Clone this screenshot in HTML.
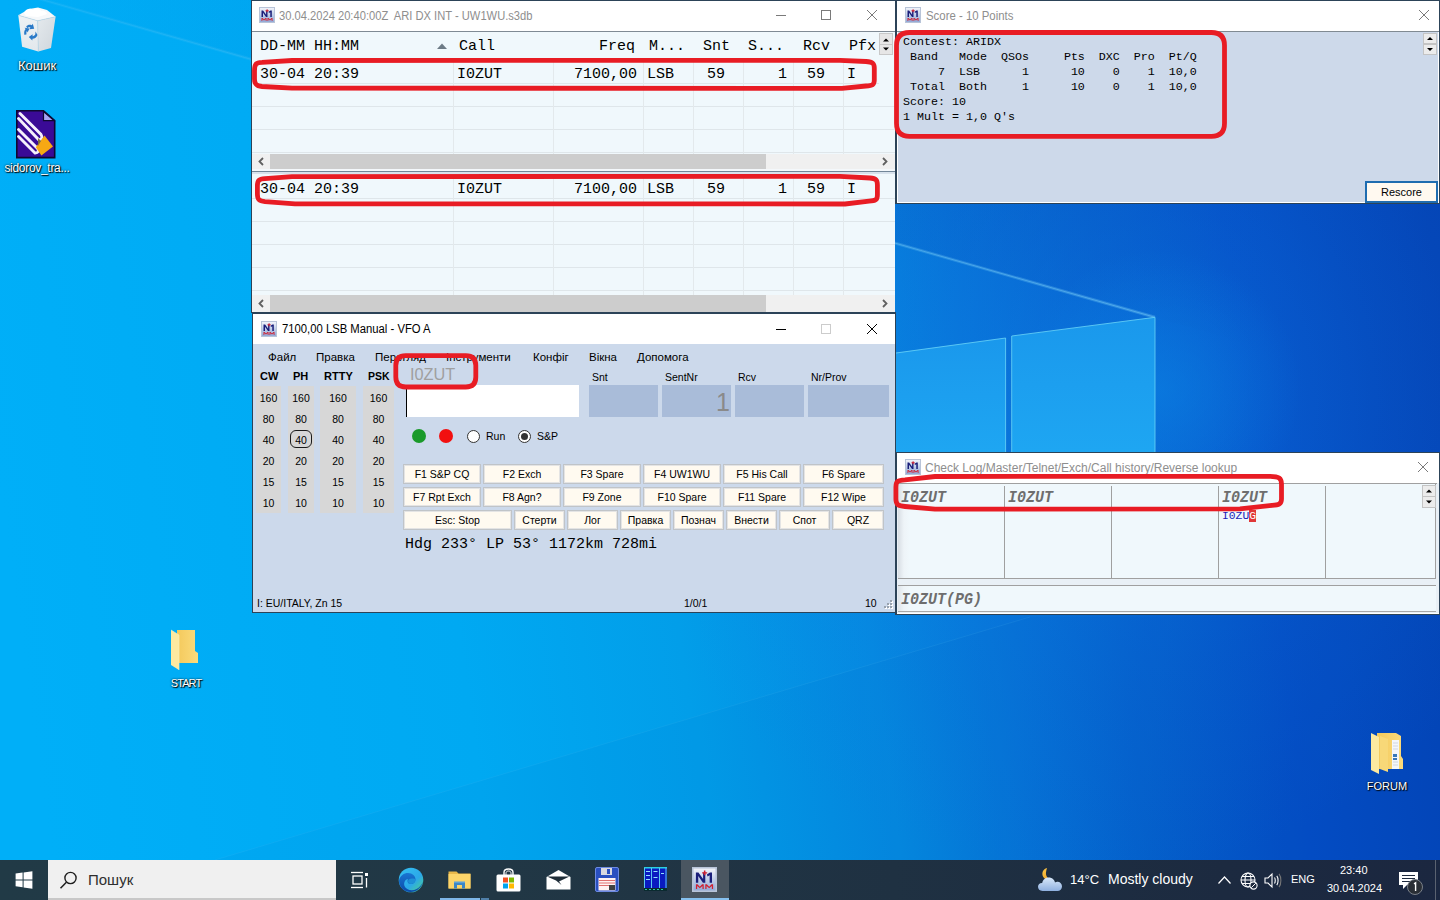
<!DOCTYPE html>
<html><head><meta charset="utf-8">
<style>
*{margin:0;padding:0;box-sizing:border-box}
html,body{width:1440px;height:900px;overflow:hidden}
body{position:relative;font-family:"Liberation Sans",sans-serif;background:#00aef5}
.a{position:absolute}
.mono{font-family:"Liberation Mono",monospace}
.pre{white-space:pre}
#wall{position:absolute;left:0;top:0;width:1440px;height:860px;
 background:linear-gradient(96deg,#00b0f8 0%,#00adf4 50%,#038ce4 64%,#055fcf 76%,#0546b8 90%,#0a3ca8 100%)}
.win{position:absolute;overflow:hidden}
.tb{position:absolute;left:0;top:0;right:0;background:#fff}
.ttl{position:absolute;font-size:12px;color:#8c8c8c;white-space:pre}
.ico{position:absolute;width:16px;height:16px}
#taskbar{position:absolute;left:0;top:860px;width:1440px;height:40px;background:linear-gradient(90deg,#213a46 0%,#213745 35%,#1f3142 62%,#1c2a40 85%,#1b2740 100%)}
.dlbl{position:absolute;color:#fff;font-size:12px;text-align:center;text-shadow:0 0 2px #000,1px 1px 1px #000}
.band{top:386px;height:127px;background:#d7d7d7}
.bnum{top:387.5px;font-size:10.5px;line-height:21px;text-align:center;color:#000}
.fbox{top:385px;height:32px;background:#a9bcd9}
.fk{height:20px;background:#fffaf0;border:1px solid #c0c4c8;box-shadow:inset 0 0 0 1px #e4e4e4;font-size:10.5px;line-height:18px;text-align:center;color:#000;white-space:pre}
.chk{font-size:15px;line-height:18px;font-weight:bold;font-style:italic;color:#6e6e6e}
</style></head>
<body>
<svg id="wall" class="a" style="left:0;top:0" width="1440" height="860" viewBox="0 0 1440 860">
<defs>
 <linearGradient id="wbase" x1="0" y1="500" x2="1440" y2="300" gradientUnits="userSpaceOnUse">
  <stop offset="0" stop-color="#00aff8"/>
  <stop offset=".30" stop-color="#00a9f2"/>
  <stop offset=".45" stop-color="#029ee9"/>
  <stop offset=".58" stop-color="#0589e0"/>
  <stop offset=".67" stop-color="#0672d6"/>
  <stop offset=".75" stop-color="#0560cc"/>
  <stop offset=".86" stop-color="#044cc4"/>
  <stop offset="1" stop-color="#0442b4"/>
 </linearGradient>
 <linearGradient id="wpane" x1="0" y1="0" x2="0" y2="1">
  <stop offset="0" stop-color="#1a98ec"/>
  <stop offset="1" stop-color="#1ea6f2"/>
 </linearGradient>
 <linearGradient id="wshad" x1="0" y1="0" x2="1440" y2="0" gradientUnits="userSpaceOnUse">
  <stop offset="0" stop-color="#0446b4" stop-opacity="0"/>
  <stop offset=".25" stop-color="#0446b4" stop-opacity=".06"/>
  <stop offset=".62" stop-color="#0446b4" stop-opacity=".2"/>
  <stop offset=".76" stop-color="#0446b4" stop-opacity=".22"/>
  <stop offset=".88" stop-color="#0446b4" stop-opacity="0"/>
 </linearGradient>
 <linearGradient id="wbeam" x1="0" y1="0" x2="1155" y2="0" gradientUnits="userSpaceOnUse">
  <stop offset="0" stop-color="#7ad0f8" stop-opacity=".15"/>
  <stop offset=".6" stop-color="#7ad0f8" stop-opacity=".4"/>
  <stop offset="1" stop-color="#7ad0f8" stop-opacity=".6"/>
 </linearGradient>
 <radialGradient id="wglow2" cx="1090" cy="400" r="480" gradientUnits="userSpaceOnUse">
  <stop offset="0" stop-color="#1080e8" stop-opacity=".45"/>
  <stop offset=".6" stop-color="#1080e8" stop-opacity=".15"/>
  <stop offset="1" stop-color="#1080e8" stop-opacity="0"/>
 </radialGradient>
 <radialGradient id="wglow" cx="1160" cy="390" r="140" gradientUnits="userSpaceOnUse">
  <stop offset="0" stop-color="#0a84e4" stop-opacity=".55"/>
  <stop offset="1" stop-color="#0a84e4" stop-opacity="0"/>
 </radialGradient>
</defs>
<rect width="1440" height="860" fill="url(#wbase)"/>
<polygon points="0,-12.4 1155,317.3 1440,399 1440,0 0,0" fill="url(#wshad)"/>
<rect x="700" y="0" width="740" height="860" fill="url(#wglow2)"/>
<rect x="1000" y="250" width="320" height="280" fill="url(#wglow)"/>
<polygon points="1030,617 215,860 1440,860 1440,617" fill="#0446b4" opacity=".05"/>
<path d="M0 -12.4L1155 317.3" stroke="url(#wbeam)" stroke-width="3" opacity=".5"/><path d="M0 -12.4L1155 317.3" stroke="url(#wbeam)" stroke-width="1" opacity=".8"/>
<line x1="1030" y1="617" x2="215" y2="860" stroke="#5cc4f4" stroke-width="1" opacity=".12"/>
<polygon points="880,355 1005.6,338 1005.6,452 880,452" fill="url(#wpane)"/>
<polygon points="1011.7,336 1155,317.3 1155,452 1011.7,452" fill="url(#wpane)"/>
<path d="M896 353L1005.6 338V452M1011.7 452V336L1155 317.3V452" fill="none" stroke="#6ad4f8" stroke-width="1" opacity=".8"/>
</svg>
<svg width="0" height="0" style="position:absolute"><defs><linearGradient id="nmg" x1="0" y1="0" x2="0" y2="1"><stop offset="0" stop-color="#f4f6fb"/><stop offset="1" stop-color="#8ea6d6"/></linearGradient><symbol id="nmico" viewBox="0 0 16 16"><rect x="0" y="0" width="16" height="16" fill="#8aa0c8"/><rect x="0.5" y="0.5" width="15" height="15" fill="url(#nmg)" stroke="#b8c4d8"/><path d="M2.5 10V3.5h1.6l3 4.2V3.5h1.4V10H7L4 5.8V10z" fill="#1a1e7a"/><path d="M9.5 4.8l2-1.3h1.3V10h-1.5V5.2l-1.3.8z" fill="#1a1e7a"/><path d="M7.6 2.2h1v1.1h1.1v.9H8.6v1.1h-1V4.2H6.5v-.9h1.1z" fill="#d02030"/><path d="M2.5 14v-3h1l1.5 1.6L6.5 11h1v3h-.8v-1.8L5 13.6 3.3 12.2V14zM8.5 14v-3h1l1.5 1.6 1.5-1.6h1v3h-.8v-1.8L11 13.6 9.3 12.2V14z" fill="#d02030"/></symbol></defs></svg>

<!-- DESKTOP ICONS -->
<svg class="a" style="left:14px;top:4px" width="48" height="52" viewBox="0 0 48 52">
 <defs><linearGradient id="rbl" x1="0" y1="0" x2="0" y2="1"><stop offset="0" stop-color="#eef2f5"/><stop offset="1" stop-color="#e2e8ec"/></linearGradient>
 <linearGradient id="rbr" x1="0" y1="0" x2="1" y2="1"><stop offset="0" stop-color="#e4e9ed"/><stop offset="1" stop-color="#cfd6dc"/></linearGradient></defs>
 <path d="M4.3 11.3L15 5L24 3.5L33 6L41.6 12.7L23.7 16.8z" fill="#f6f8fa"/>
 <path d="M10 9C12 4 17 4 19 6C21 3 26 4 27 7C30 6 33 8 33 10L24 13L12 12z" fill="#ffffff"/>
 <path d="M4.3 11.3L23.7 16.8L24.3 47.4L8.1 42.8z" fill="url(#rbl)"/>
 <path d="M23.7 16.8L41.6 12.7L37 43.9L24.3 47.4z" fill="url(#rbr)"/>
 <path d="M4.3 11.3L23.7 16.8L41.6 12.7M23.7 16.8L24.3 47.4" fill="none" stroke="#c4d4e0" stroke-width=".7"/>
 <g fill="#2a7ac8">
  <path d="M12.2 22.5C13.5 20.8 15.8 20.2 17.8 21.2L18.8 19.8L20.2 24.8L15.4 25.2L16.4 23.6C15.2 23 14 23.3 13.3 24.2z"/>
  <path d="M21.5 27.5L23.5 31C22.8 33.3 20.8 34.8 18.5 34.8L18.3 36.6L14.8 33L18.6 30.3L18.6 32.2C19.8 32.2 20.9 31.4 21.3 30.3z"/>
  <path d="M10.5 31C9.8 28.8 10.2 26.6 11.6 25L10.6 23.8L15.5 24.6L13.6 28.6L12.9 27.1C12.3 28 12.2 29.2 12.6 30.2z"/>
 </g>
</svg>
<div class="dlbl" style="left:0px;top:58px;width:74px;font-size:13px;line-height:15px">Кошик</div>
<svg class="a" style="left:16px;top:110px" width="40" height="49" viewBox="0 0 40 49">
 <path d="M0.8 0.8H27.5L38.7 10.6V47.6H0.8z" fill="#3a0a96" stroke="#0e0830" stroke-width="1.6"/>
 <path d="M27.5 1.5V10.6H38z" fill="#a8a4f4" stroke="#0e0830" stroke-width="1.2"/>
 <g fill="none" stroke="#f6f0fc" stroke-width="2.9" stroke-linecap="round"><path d="M4 3.5L25 24.5Q27.5 28.5 23 30L2.5 8.5"/><path d="M2.5 19.5L21.5 38.5Q24 42.5 19 43L2.5 26.5"/></g>
 <path d="M28.5 25.4L37 36.6L25.4 45.4L19.8 37.2z" fill="#f6a814"/>
 <path d="M22 28L25 31L22 36z" fill="#807040"/>
</svg>
<div class="dlbl" style="left:-4px;top:161px;width:82px;font-size:12px;line-height:14px;letter-spacing:-.3px">sidorov_tra...</div>
<svg class="a" style="left:170px;top:629px" width="30" height="42" viewBox="0 0 30 42">
 <defs><linearGradient id="fg1" x1="0" y1="0" x2="1" y2="0"><stop offset="0" stop-color="#f4c95c"/><stop offset="1" stop-color="#fbdb7c"/></linearGradient></defs>
 <path d="M7 1H25V22L28 24V34H7z" fill="url(#fg1)"/>
 <path d="M1 1L9 6V41L1 36z" fill="#fde9a0"/>
 <path d="M1 1L9 6V41" fill="none" stroke="#f8f0c0" stroke-width=".6"/>
</svg>
<div class="dlbl" style="left:146px;top:676px;width:80px;font-size:11px;line-height:14px;letter-spacing:-.9px">START</div>
<svg class="a" style="left:1370px;top:732px" width="34" height="43" viewBox="0 0 34 43">
 <defs><linearGradient id="fg2" x1="0" y1="0" x2="1" y2="0"><stop offset="0" stop-color="#f4c95c"/><stop offset="1" stop-color="#fbdb7c"/></linearGradient></defs>
 <path d="M7 1H26L31 4V24L33 27V37H7z" fill="url(#fg2)"/>
 <path d="M22 8H29V37H22z" fill="#f4f6fa"/>
 <g fill="#3a78b8"><rect x="23" y="22" width="4" height="3"/><rect x="23" y="26" width="4" height="2"/></g>
 <g stroke="#b8c4d0" stroke-width=".6"><path d="M23 11H28M23 14H28M23 17H28M23 30H28M23 33H28"/></g>
 <path d="M1 1L9 5V42L1 38z" fill="#fde9a0"/>
 <path d="M10 4L18 7V40L10 37z" fill="#f8d878"/>
</svg>
<div class="dlbl" style="left:1347px;top:779px;width:80px;font-size:11px;line-height:14px">FORUM</div>

<!-- LOG WINDOW -->
<div class="a" style="left:251px;top:0;width:644px;height:313px;background:#2c4358"></div>
<div class="a" style="left:252px;top:1px;width:643px;height:30px;background:#fff"></div>
<div class="a" style="left:252px;top:31px;width:643px;height:1px;background:#7f8a94"></div>
<div class="ico" style="left:259px;top:7px"><svg width="16" height="16" viewBox="0 0 16 16"><rect x="0" y="0" width="16" height="16" fill="#8aa0c8"/><rect x="0.5" y="0.5" width="15" height="15" fill="url(#nmg)" stroke="#b8c4d8"/><path d="M2.5 10V3.5h1.6l3 4.2V3.5h1.4V10H7L4 5.8V10z" fill="#1a1e7a"/><path d="M9.5 4.8l2-1.3h1.3V10h-1.5V5.2l-1.3.8z" fill="#1a1e7a"/><path d="M7.6 2.2h1v1.1h1.1v.9H8.6v1.1h-1V4.2H6.5v-.9h1.1z" fill="#d02030"/><path d="M2.5 14v-3h1l1.5 1.6L6.5 11h1v3h-.8v-1.8L5 13.6 3.3 12.2V14zM8.5 14v-3h1l1.5 1.6 1.5-1.6h1v3h-.8v-1.8L11 13.6 9.3 12.2V14z" fill="#d02030"/></svg></div>
<div class="ttl" style="left:279px;top:9px;font-size:12px;color:#8e8e8e;transform:scaleX(.93);transform-origin:0 0">30.04.2024 20:40:00Z  ARI DX INT - UW1WU.s3db</div>
<svg class="a" style="left:770px;top:4px" width="120" height="24">
 <line x1="6" y1="11.5" x2="16" y2="11.5" stroke="#7a7a7a" stroke-width="1"/>
 <rect x="51.5" y="6.5" width="9" height="9" fill="none" stroke="#7a7a7a" stroke-width="1"/>
 <path d="M97 6L107 16M107 6L97 16" stroke="#7a7a7a" stroke-width="1"/>
</svg>
<!-- grid pane 1 -->
<div class="a" style="left:252px;top:32px;width:643px;height:122px;background:#f0f8fc"></div>
<div class="a mono pre" style="left:260px;top:38px;font-size:15px;line-height:18px;color:#000">DD-MM HH:MM</div>
<svg class="a" style="left:436px;top:42px" width="12" height="8"><path d="M1 7L6 1.5L11 7z" fill="#6d7b86"/></svg>
<div class="a mono pre" style="left:459px;top:38px;font-size:15px;line-height:18px">Call</div>
<div class="a mono pre" style="left:599px;top:38px;font-size:15px;line-height:18px">Freq</div>
<div class="a mono pre" style="left:649px;top:38px;font-size:15px;line-height:18px">M...</div>
<div class="a mono pre" style="left:703px;top:38px;font-size:15px;line-height:18px">Snt</div>
<div class="a mono pre" style="left:748px;top:38px;font-size:15px;line-height:18px">S...</div>
<div class="a mono pre" style="left:803px;top:38px;font-size:15px;line-height:18px">Rcv</div>
<div class="a mono pre" style="left:849px;top:38px;font-size:15px;line-height:18px">Pfx</div>
<!-- spin -->
<div class="a" style="left:879px;top:33px;width:14px;height:22px;background:#e6e6e6;border:1px solid #c8c8c8"></div>
<div class="a" style="left:879px;top:44px;width:14px;height:1px;background:#c8c8c8"></div>
<svg class="a" style="left:879px;top:33px" width="14" height="22"><path d="M4 8.5L7 5.5L10 8.5z" fill="#000"/><path d="M4 14.5L7 17.5L10 14.5z" fill="#000"/></svg>
<!-- grid lines pane1 -->
<div class="a" style="left:252px;top:83px;width:627px;height:1px;background:#dfe6ea"></div>
<div class="a" style="left:252px;top:106px;width:643px;height:1px;background:#dfe6ea"></div>
<div class="a" style="left:252px;top:129px;width:643px;height:1px;background:#dfe6ea"></div>
<div class="a" style="left:252px;top:152px;width:643px;height:1px;background:#dfe6ea"></div>
<div class="a" style="left:453px;top:61px;width:1px;height:93px;background:#e3e9ec"></div>
<div class="a" style="left:553px;top:61px;width:1px;height:93px;background:#e3e9ec"></div>
<div class="a" style="left:643px;top:61px;width:1px;height:93px;background:#e3e9ec"></div>
<div class="a" style="left:693px;top:61px;width:1px;height:93px;background:#e3e9ec"></div>
<div class="a" style="left:743px;top:61px;width:1px;height:93px;background:#e3e9ec"></div>
<div class="a" style="left:793px;top:61px;width:1px;height:93px;background:#e3e9ec"></div>
<div class="a" style="left:843px;top:61px;width:1px;height:93px;background:#e3e9ec"></div>
<!-- row 1 -->
<div class="a mono pre" style="left:260px;top:66px;font-size:15px;line-height:18px">30-04 20:39</div>
<div class="a mono pre" style="left:457px;top:66px;font-size:15px;line-height:18px">I0ZUT</div>
<div class="a mono pre" style="left:574px;top:66px;font-size:15px;line-height:18px">7100,00</div>
<div class="a mono pre" style="left:647px;top:66px;font-size:15px;line-height:18px">LSB</div>
<div class="a mono pre" style="left:707px;top:66px;font-size:15px;line-height:18px">59</div>
<div class="a mono pre" style="left:778px;top:66px;font-size:15px;line-height:18px">1</div>
<div class="a mono pre" style="left:807px;top:66px;font-size:15px;line-height:18px">59</div>
<div class="a mono pre" style="left:847px;top:66px;font-size:15px;line-height:18px">I</div>
<!-- scrollbar 1 -->
<div class="a" style="left:252px;top:154px;width:643px;height:15px;background:#f0f0f0"></div>
<div class="a" style="left:270px;top:154px;width:496px;height:15px;background:#cdcdcd"></div>
<svg class="a" style="left:252px;top:154px" width="642" height="15"><path d="M11 4L7.5 7.5L11 11" fill="none" stroke="#606060" stroke-width="1.8"/><path d="M631 4L634.5 7.5L631 11" fill="none" stroke="#606060" stroke-width="1.8"/></svg>
<div class="a" style="left:252px;top:169px;width:643px;height:5px;background:#f4f8fb"></div>
<div class="a" style="left:252px;top:171px;width:643px;height:1px;background:#728698"></div>
<div class="a" style="left:252px;top:172px;width:643px;height:2px;background:#d8e2ec"></div>
<!-- pane 2 -->
<div class="a" style="left:252px;top:174px;width:643px;height:121px;background:#f0f8fc"></div>
<div class="a" style="left:252px;top:198px;width:643px;height:1px;background:#dfe6ea"></div>
<div class="a" style="left:252px;top:221px;width:643px;height:1px;background:#dfe6ea"></div>
<div class="a" style="left:252px;top:244px;width:643px;height:1px;background:#dfe6ea"></div>
<div class="a" style="left:252px;top:267px;width:643px;height:1px;background:#dfe6ea"></div>
<div class="a" style="left:252px;top:290px;width:643px;height:1px;background:#dfe6ea"></div>
<div class="a" style="left:453px;top:175px;width:1px;height:120px;background:#e3e9ec"></div>
<div class="a" style="left:553px;top:175px;width:1px;height:120px;background:#e3e9ec"></div>
<div class="a" style="left:643px;top:175px;width:1px;height:120px;background:#e3e9ec"></div>
<div class="a" style="left:693px;top:175px;width:1px;height:120px;background:#e3e9ec"></div>
<div class="a" style="left:743px;top:175px;width:1px;height:120px;background:#e3e9ec"></div>
<div class="a" style="left:793px;top:175px;width:1px;height:120px;background:#e3e9ec"></div>
<div class="a" style="left:843px;top:175px;width:1px;height:120px;background:#e3e9ec"></div>
<div class="a mono pre" style="left:260px;top:181px;font-size:15px;line-height:18px">30-04 20:39</div>
<div class="a mono pre" style="left:457px;top:181px;font-size:15px;line-height:18px">I0ZUT</div>
<div class="a mono pre" style="left:574px;top:181px;font-size:15px;line-height:18px">7100,00</div>
<div class="a mono pre" style="left:647px;top:181px;font-size:15px;line-height:18px">LSB</div>
<div class="a mono pre" style="left:707px;top:181px;font-size:15px;line-height:18px">59</div>
<div class="a mono pre" style="left:778px;top:181px;font-size:15px;line-height:18px">1</div>
<div class="a mono pre" style="left:807px;top:181px;font-size:15px;line-height:18px">59</div>
<div class="a mono pre" style="left:847px;top:181px;font-size:15px;line-height:18px">I</div>
<!-- scrollbar 2 -->
<div class="a" style="left:252px;top:295px;width:643px;height:17px;background:#f0f0f0"></div>
<div class="a" style="left:270px;top:295px;width:496px;height:17px;background:#cdcdcd"></div>
<svg class="a" style="left:252px;top:295px" width="642" height="17"><path d="M11 5L7.5 8.5L11 12" fill="none" stroke="#606060" stroke-width="1.8"/><path d="M631 5L634.5 8.5L631 12" fill="none" stroke="#606060" stroke-width="1.8"/></svg>

<!-- SCORE WINDOW -->
<div class="a" style="left:895px;top:0;width:545px;height:204px;background:#2c4358"></div>
<div class="a" style="left:897px;top:1px;width:542px;height:202px;background:#fff"></div>
<div class="a" style="left:898px;top:31px;width:540px;height:171px;background:#cdd9ea"></div>
<div class="a" style="left:897px;top:31px;width:542px;height:1px;background:#808a92"></div>
<svg class="ico" style="left:905px;top:7px" width="16" height="16" viewBox="0 0 16 16"><use href="#nmico"/></svg>
<div class="ttl" style="left:926px;top:9px;font-size:12px;color:#8e8e8e;transform:scaleX(.95);transform-origin:0 0">Score - 10 Points</div>
<svg class="a" style="left:1414px;top:5px" width="20" height="20"><path d="M5 5L15 15M15 5L5 15" stroke="#7a7a7a" stroke-width="1"/></svg>
<div class="a mono pre" style="left:903px;top:35px;font-size:11.67px;line-height:15px;color:#000">Contest: ARIDX
 Band   Mode  QSOs     Pts  DXC  Pro  Pt/Q
     7  LSB      1      10    0    1  10,0
 Total  Both     1      10    0    1  10,0
Score: 10
1 Mult = 1,0 Q's</div>
<div class="a" style="left:1423px;top:33px;width:14px;height:11px;background:#ececec;border:1px solid #c4c4c4"></div>
<div class="a" style="left:1423px;top:44px;width:14px;height:11px;background:#ececec;border:1px solid #c4c4c4"></div>
<svg class="a" style="left:1423px;top:33px" width="14" height="22"><path d="M4 7L7 4L10 7z" fill="#000"/><path d="M4 15L7 18L10 15z" fill="#000"/></svg>
<div class="a" style="left:1365px;top:181px;width:73px;height:22px;border:2px solid #1e6cb0;background:#fff9f0;font-size:11px;line-height:18px;text-align:center;color:#000">Rescore</div>

<!-- ENTRY WINDOW -->
<div class="a" style="left:252px;top:312px;width:644px;height:301px;background:#2c4358"></div>
<div class="a" style="left:253px;top:314px;width:642px;height:30px;background:#fff"></div>
<div class="a" style="left:253px;top:344px;width:642px;height:268px;background:#ccd9eb"></div>
<svg class="ico" style="left:261px;top:321px" width="16" height="16" viewBox="0 0 16 16"><use href="#nmico"/></svg>
<div class="ttl" style="left:282px;top:322px;font-size:12px;color:#000;transform:scaleX(.94);transform-origin:0 0">7100,00 LSB Manual - VFO A</div>
<svg class="a" style="left:770px;top:318px" width="120" height="24">
 <line x1="6" y1="11.5" x2="16" y2="11.5" stroke="#000" stroke-width="1"/>
 <rect x="51.5" y="6.5" width="9" height="9" fill="none" stroke="#cccccc" stroke-width="1"/>
 <path d="M97 6L107 16M107 6L97 16" stroke="#000" stroke-width="1"/>
</svg>
<!-- menu -->
<div class="a pre" style="left:268px;top:350px;font-size:11.5px;line-height:14px;color:#000">Файл</div>
<div class="a pre" style="left:316px;top:350px;font-size:11.5px;line-height:14px">Правка</div>
<div class="a pre" style="left:375px;top:350px;font-size:11.5px;line-height:14px">Перегляд</div>
<div class="a pre" style="left:446px;top:350px;font-size:11.5px;line-height:14px">Інструменти</div>
<div class="a pre" style="left:533px;top:350px;font-size:11.5px;line-height:14px">Конфіг</div>
<div class="a pre" style="left:589px;top:350px;font-size:11.5px;line-height:14px">Вікна</div>
<div class="a pre" style="left:637px;top:350px;font-size:11.5px;line-height:14px">Допомога</div>
<!-- band headers -->
<div class="a pre" style="left:260px;top:370px;font-size:11px;font-weight:bold;line-height:13px">CW</div>
<div class="a pre" style="left:293px;top:370px;font-size:11px;font-weight:bold;line-height:13px">PH</div>
<div class="a pre" style="left:324px;top:370px;font-size:11px;font-weight:bold;line-height:13px">RTTY</div>
<div class="a pre" style="left:368px;top:370px;font-size:10.5px;font-weight:bold;line-height:13px">PSK</div>
<!-- band columns -->
<div class="a band" style="left:256px;width:25px"></div>
<div class="a band" style="left:288px;width:26px"></div>
<div class="a band" style="left:320px;width:36px"></div>
<div class="a band" style="left:363px;width:31px"></div>
<div class="a bnum" style="left:256px;width:25px">160<br>80<br>40<br>20<br>15<br>10</div>
<div class="a bnum" style="left:288px;width:26px">160<br>80<br>40<br>20<br>15<br>10</div>
<div class="a bnum" style="left:320px;width:36px">160<br>80<br>40<br>20<br>15<br>10</div>
<div class="a bnum" style="left:363px;width:31px">160<br>80<br>40<br>20<br>15<br>10</div>
<div class="a" style="left:290px;top:430px;width:22px;height:18px;border:1.3px solid #1a1a1a;border-radius:6px"></div>
<!-- call -->
<div class="a pre" style="left:410px;top:365px;font-size:17px;line-height:20px;color:#a0a0a0;transform:scaleX(.96);transform-origin:0 0">I0ZUT</div>
<div class="a" style="left:406px;top:385px;width:173px;height:32px;background:#fff"></div>
<div class="a" style="left:406px;top:386px;width:1px;height:31px;background:#000"></div>
<!-- labels -->
<div class="a pre" style="left:592px;top:371px;font-size:10.5px;line-height:13px">Snt</div>
<div class="a pre" style="left:665px;top:371px;font-size:10.5px;line-height:13px">SentNr</div>
<div class="a pre" style="left:738px;top:371px;font-size:10.5px;line-height:13px">Rcv</div>
<div class="a pre" style="left:811px;top:371px;font-size:10.5px;line-height:13px">Nr/Prov</div>
<div class="a fbox" style="left:589px;width:69px"></div>
<div class="a fbox" style="left:662px;width:69px"></div>
<div class="a fbox" style="left:735px;width:69px"></div>
<div class="a fbox" style="left:808px;width:81px"></div>
<div class="a pre" style="left:716px;top:388px;font-size:25px;line-height:28px;color:#8a8a8a">1</div>
<!-- leds & radios -->
<div class="a" style="left:412px;top:429px;width:14px;height:14px;border-radius:50%;background:#1a9a2a"></div>
<div class="a" style="left:439px;top:429px;width:14px;height:14px;border-radius:50%;background:#f21010"></div>
<div class="a" style="left:467px;top:430px;width:13px;height:13px;border-radius:50%;background:#fff;border:1px solid #333"></div>
<div class="a pre" style="left:486px;top:430px;font-size:10.5px;line-height:13px">Run</div>
<div class="a" style="left:518px;top:430px;width:13px;height:13px;border-radius:50%;background:#fff;border:1px solid #333"></div>
<div class="a" style="left:521px;top:433px;width:7px;height:7px;border-radius:50%;background:#333"></div>
<div class="a pre" style="left:537px;top:430px;font-size:10.5px;line-height:13px">S&amp;P</div>
<!-- function keys -->
<div class="a fk" style="left:403px;top:464px;width:78px">F1 S&amp;P CQ</div>
<div class="a fk" style="left:483px;top:464px;width:78px">F2 Exch</div>
<div class="a fk" style="left:563px;top:464px;width:78px">F3 Spare</div>
<div class="a fk" style="left:643px;top:464px;width:78px">F4 UW1WU</div>
<div class="a fk" style="left:723px;top:464px;width:78px">F5 His Call</div>
<div class="a fk" style="left:803px;top:464px;width:81px">F6 Spare</div>
<div class="a fk" style="left:403px;top:487px;width:78px">F7 Rpt Exch</div>
<div class="a fk" style="left:483px;top:487px;width:78px">F8 Agn?</div>
<div class="a fk" style="left:563px;top:487px;width:78px">F9 Zone</div>
<div class="a fk" style="left:643px;top:487px;width:78px">F10 Spare</div>
<div class="a fk" style="left:723px;top:487px;width:78px">F11 Spare</div>
<div class="a fk" style="left:803px;top:487px;width:81px">F12 Wipe</div>
<div class="a fk" style="left:403px;top:510px;width:109px">Esc: Stop</div>
<div class="a fk" style="left:514px;top:510px;width:51px">Стерти</div>
<div class="a fk" style="left:567px;top:510px;width:51px">Лог</div>
<div class="a fk" style="left:620px;top:510px;width:51px">Правка</div>
<div class="a fk" style="left:673px;top:510px;width:51px">Познач</div>
<div class="a fk" style="left:726px;top:510px;width:51px">Внести</div>
<div class="a fk" style="left:779px;top:510px;width:51px">Спот</div>
<div class="a fk" style="left:832px;top:510px;width:52px">QRZ</div>
<div class="a mono pre" style="left:405px;top:536px;font-size:15px;line-height:18px">Hdg 233° LP 53° 1172km 728mi</div>
<!-- status -->
<div class="a pre" style="left:257px;top:597px;font-size:10.5px;line-height:12px">I: EU/ITALY, Zn 15</div>
<div class="a pre" style="left:684px;top:597px;font-size:10.5px;line-height:12px">1/0/1</div>
<div class="a pre" style="left:865px;top:597px;font-size:10.5px;line-height:12px">10</div>
<svg class="a" style="left:882px;top:599px" width="12" height="12"><g fill="#fff"><rect x="9" y="2" width="2" height="2"/><rect x="6" y="5" width="2" height="2"/><rect x="9" y="5" width="2" height="2"/><rect x="3" y="8" width="2" height="2"/><rect x="6" y="8" width="2" height="2"/><rect x="9" y="8" width="2" height="2"/></g><g fill="#98a2ae"><rect x="8" y="1" width="2" height="2"/><rect x="5" y="4" width="2" height="2"/><rect x="8" y="4" width="2" height="2"/><rect x="2" y="7" width="2" height="2"/><rect x="5" y="7" width="2" height="2"/><rect x="8" y="7" width="2" height="2"/></g></svg>

<!-- CHECK WINDOW -->
<div class="a" style="left:895px;top:452px;width:545px;height:163px;background:#2c4358"></div>
<div class="a" style="left:897px;top:453px;width:542px;height:161px;background:#fff"></div>
<svg class="ico" style="left:905px;top:459px" width="16" height="16" viewBox="0 0 16 16"><use href="#nmico"/></svg>
<div class="ttl" style="left:925px;top:461px;font-size:12px;color:#8e8e8e">Check Log/Master/Telnet/Exch/Call history/Reverse lookup</div>
<svg class="a" style="left:1413px;top:457px" width="20" height="20"><path d="M5 5L15 15M15 5L5 15" stroke="#7a7a7a" stroke-width="1"/></svg>
<div class="a" style="left:897px;top:483px;width:542px;height:130px;background:#e9f0f6"></div>
<div class="a" style="left:897px;top:483px;width:540px;height:1px;background:#a0a0a0"></div>
<div class="a" style="left:898px;top:484px;width:538px;height:94px;background:linear-gradient(90deg,#d8dee4 0px,#eef4f8 6px,#f0f8fc 12px)"></div>
<div class="a" style="left:898px;top:578px;width:538px;height:1px;background:#a0a0a0"></div>
<div class="a" style="left:1435px;top:484px;width:1px;height:95px;background:#a0a0a0"></div>
<div class="a" style="left:1004px;top:486px;width:1px;height:92px;background:#a0a0a0"></div>
<div class="a" style="left:1111px;top:486px;width:1px;height:92px;background:#a0a0a0"></div>
<div class="a" style="left:1218px;top:486px;width:1px;height:92px;background:#a0a0a0"></div>
<div class="a" style="left:1325px;top:486px;width:1px;height:92px;background:#a0a0a0"></div>
<div class="a mono pre chk" style="left:901px;top:489px;transform:scaleY(1.1);transform-origin:0 0">I0ZUT</div>
<div class="a mono pre chk" style="left:1008px;top:489px;transform:scaleY(1.1);transform-origin:0 0">I0ZUT</div>
<div class="a mono pre chk" style="left:1222px;top:489px;transform:scaleY(1.1);transform-origin:0 0">I0ZUT</div>
<div class="a mono pre" style="left:1222px;top:509px;font-size:11.33px;line-height:14px;color:#1c1cb8">I0ZU<span style="background:#e03838;color:#fff">G</span></div>
<div class="a" style="left:1422px;top:485px;width:14px;height:12px;background:#ececec;border:1px solid #c4c4c4"></div>
<div class="a" style="left:1422px;top:496px;width:14px;height:12px;background:#ececec;border:1px solid #c4c4c4"></div>
<svg class="a" style="left:1422px;top:485px" width="14" height="24"><path d="M4 7.5L7 4.5L10 7.5z" fill="#000"/><path d="M4 15.5L7 18.5L10 15.5z" fill="#000"/></svg>
<div class="a" style="left:898px;top:585px;width:538px;height:27px;background:linear-gradient(90deg,#dfe5ea 0px,#eef4f8 6px,#f0f8fc 12px);border-top:1px solid #a0a0a0;border-bottom:1px solid #a8a8a8"></div>
<div class="a mono pre chk" style="left:901px;top:591px;transform:scaleY(1.1);transform-origin:0 0">I0ZUT(PG)</div>

<div id="taskbar"></div>
<!-- start -->
<svg class="a" style="left:15px;top:871px" width="18" height="18" viewBox="0 0 18 18"><path d="M0.6 2.6L7.6 1.6V8.4H0.6z M8.6 1.45L17.4 0.2V8.4H8.6z M0.6 9.4H7.6V16.3L0.6 15.3z M8.6 9.4H17.4V17.7L8.6 16.5z" fill="#fff"/></svg>
<!-- search -->
<div class="a" style="left:48px;top:860px;width:288px;height:40px;background:#f0f0f0;border-bottom:2px solid #c8c8c8"></div>
<svg class="a" style="left:59px;top:871px" width="19" height="19" viewBox="0 0 19 19"><circle cx="11.5" cy="7" r="5.6" fill="none" stroke="#1e1e1e" stroke-width="1.4"/><path d="M7.4 11.2L1.5 17.3" stroke="#1e1e1e" stroke-width="1.5"/></svg>
<div class="a pre" style="left:88px;top:871px;font-size:15px;line-height:18px;color:#2e2e2e">Пошук</div>
<!-- task view -->
<svg class="a" style="left:350px;top:871px" width="19" height="18" viewBox="0 0 19 18"><g fill="none" stroke="#fff" stroke-width="1.3"><path d="M1 1.5H13"/><path d="M1 16.5H13"/><rect x="3" y="5" width="9" height="8"/><path d="M16.5 7V16.5"/></g><rect x="15" y="2" width="3" height="3" fill="#fff"/></svg>
<!-- edge -->
<svg class="a" style="left:398px;top:867px" width="26" height="26" viewBox="0 0 26 26"><defs><linearGradient id="eg1" x1="0" y1="0" x2="1" y2="1"><stop offset="0" stop-color="#35c1f1"/><stop offset=".6" stop-color="#2ba8e8"/><stop offset="1" stop-color="#52d680"/></linearGradient><linearGradient id="eg2" x1="0" y1="0" x2="0" y2="1"><stop offset="0" stop-color="#1976d2"/><stop offset="1" stop-color="#0c4aa8"/></linearGradient></defs><circle cx="13" cy="13" r="12.3" fill="url(#eg1)"/><path d="M25 14.5C24 20 19 25 12.5 25C6 25 1 20 1 13.5C2 8.5 6 6 10 6C14.5 6 17.5 9 17.5 12.5C17.5 15 15.5 17 13 17C9.5 17 9 14 10 12C7 12.5 5.5 15.5 6.5 19C8 23 14 24.5 18.5 22C21.5 20.5 23.5 18 25 14.5z" fill="url(#eg2)"/><path d="M17.5 12.5C17.5 15 15.5 17 13 17C11 17 10 15.8 10 14.3C10.2 12.5 12 11.4 14.5 11.6C16 11.7 17.2 12 17.5 12.5z" fill="#1e90d8"/></svg>
<!-- explorer -->
<svg class="a" style="left:448px;top:870px" width="23" height="19" viewBox="0 0 23 19"><path d="M0.5 1.5H8.5L10.5 3.5H22.5V18.5H0.5z" fill="#e8b84a"/><rect x="0.5" y="4" width="22" height="14.5" fill="#fcd56a"/><path d="M6 18.5V12.5H17V18.5H14V15H9V18.5z" fill="#3b86c6"/><rect x="6" y="11.5" width="11" height="1.6" fill="#5aa0d8"/></svg>
<div class="a" style="left:440px;top:898px;width:40px;height:2px;background:#7db6e8"></div>
<div class="a" style="left:481px;top:898px;width:8px;height:2px;background:#4f7fa8"></div>
<!-- store -->
<svg class="a" style="left:496px;top:868px" width="25" height="24" viewBox="0 0 25 24"><path d="M8 7V4.5C8 2.3 10 1 12.5 1S17 2.3 17 4.5V7" fill="none" stroke="#fff" stroke-width="1.4"/><path d="M10 7V5.2C10 3.8 11 3 12.5 3S15 3.8 15 5.2V7" fill="none" stroke="#fff" stroke-width="1"/><rect x="0.5" y="6.5" width="24" height="17" rx="1.5" fill="#fff"/><rect x="7" y="9.5" width="5" height="5" fill="#f25022"/><rect x="13" y="9.5" width="5" height="5" fill="#7fba00"/><rect x="7" y="15.5" width="5" height="5" fill="#00a4ef"/><rect x="13" y="15.5" width="5" height="5" fill="#ffb900"/></svg>
<!-- mail -->
<svg class="a" style="left:546px;top:869px" width="25" height="21" viewBox="0 0 25 21"><path d="M0.5 8L12.5 1L24.5 8V20.5H0.5z" fill="#fff"/><path d="M1 7.5H23.5L13 12.5L15.5 16L10 11.5z" fill="#1f2d38"/></svg>
<!-- floppy -->
<svg class="a" style="left:595px;top:867px" width="24" height="25" viewBox="0 0 24 25"><rect x="0.5" y="0.5" width="23" height="24" rx="1.5" fill="#2a4fc0" stroke="#6d8ae0"/><rect x="6" y="1" width="11" height="7" fill="#d8d8e0"/><rect x="12" y="2" width="3" height="5" fill="#2a4fc0"/><rect x="3.5" y="11" width="17" height="12.5" fill="#fff2f2"/><g stroke="#e07070" stroke-width="1"><path d="M4 13.5H20M4 16H20M4 18.5H14"/></g><rect x="14" y="18" width="6" height="5" fill="#404040"/></svg>
<!-- blue grid app -->
<svg class="a" style="left:644px;top:867px" width="23" height="24" viewBox="0 0 23 24"><rect x="0" y="0" width="23" height="21" fill="#0a1ac0"/><rect x="0" y="0" width="23" height="1.5" fill="#2ad0e0"/><g stroke="#5cc8f0" stroke-width="1"><path d="M7.5 1V21M15.5 1V21M22 1V21M0.5 1V21"/></g><g fill="#8fe0ff"><rect x="2" y="4" width="4" height="1"/><rect x="2" y="8" width="4" height="1"/><rect x="2" y="12" width="4" height="1"/><rect x="9.5" y="4" width="4" height="1"/><rect x="17" y="6" width="3" height="1"/><rect x="9.5" y="10" width="4" height="1"/></g><rect x="0" y="21" width="23" height="3" fill="#0b2a30"/><g fill="#2ad0a0"><rect x="1" y="22" width="2" height="1"/><rect x="5" y="22" width="2" height="1"/><rect x="9" y="22" width="2" height="1"/><rect x="13" y="22" width="2" height="1"/><rect x="17" y="22" width="2" height="1"/></g></svg>
<!-- n1mm active -->
<div class="a" style="left:681px;top:860px;width:48px;height:40px;background:#4a5661"></div>
<div class="a" style="left:681px;top:898px;width:48px;height:2px;background:#86c0ee"></div>
<svg class="a" style="left:692px;top:867px" width="25" height="25" viewBox="0 0 16 16"><use href="#nmico"/></svg>
<!-- weather -->
<svg class="a" style="left:1037px;top:867px" width="26" height="25" viewBox="0 0 26 25"><defs><linearGradient id="mg" x1="0" y1="0" x2="1" y2="1"><stop offset="0" stop-color="#ffc94a"/><stop offset="1" stop-color="#e89a20"/></linearGradient><linearGradient id="cg" x1="0" y1="0" x2="0" y2="1"><stop offset="0" stop-color="#d8e8fa"/><stop offset="1" stop-color="#8fb0e0"/></linearGradient></defs><path d="M10 1C6 2 4.5 6 6 9.5C7.5 12.5 11 13.5 14 12.5C11 12 8.5 9 9 5.5C9.2 3.8 9.5 2.5 10 1z" fill="url(#mg)"/><path d="M5.5 24C2.5 24 1 22 1 19.8C1 17.5 3 15.8 5.2 16C5.8 12.5 8.5 10.5 11.8 10.5C15 10.5 17.5 12.8 18 15.5C19 14.8 20 14.6 21 14.8C23.5 15.2 25 17.3 25 19.5C25 22 23 24 20.5 24z" fill="url(#cg)"/></svg>
<div class="a pre" style="left:1070px;top:872px;font-size:13px;line-height:15px;color:#fff">14°C</div>
<div class="a pre" style="left:1108px;top:872px;font-size:14px;line-height:15px;color:#fff">Mostly cloudy</div>
<svg class="a" style="left:1217px;top:875px" width="15" height="10" viewBox="0 0 15 10"><path d="M1.5 8.5L7.5 2L13.5 8.5" fill="none" stroke="#fff" stroke-width="1.2"/></svg>
<svg class="a" style="left:1240px;top:872px" width="18" height="18" viewBox="0 0 18 18"><g fill="none" stroke="#fff" stroke-width="1.1"><circle cx="8" cy="8" r="7"/><ellipse cx="8" cy="8" rx="3" ry="7"/><path d="M1 8H15M2 4.5H14M2 11.5H11"/></g><circle cx="13.5" cy="13.5" r="3.6" fill="#1e2a3e" stroke="#fff" stroke-width="1.1"/><path d="M11.2 15.8L15.8 11.2" stroke="#fff" stroke-width="1"/></svg>
<svg class="a" style="left:1264px;top:872px" width="18" height="17" viewBox="0 0 18 17"><g fill="none" stroke="#fff" stroke-width="1.1"><path d="M1 6H4L8 2V15L4 11H1z"/><path d="M10.5 5.5C11.5 6.8 11.5 10.2 10.5 11.5"/><path d="M12.8 3.8C14.5 6 14.5 11 12.8 13.2"/></g><path d="M15 1.8C17.5 5 17.5 12 15 15.2" fill="none" stroke="#777" stroke-width="1.1"/></svg>
<div class="a pre" style="left:1291px;top:873px;font-size:11px;line-height:13px;color:#fff">ENG</div>
<div class="a pre" style="left:1340px;top:864px;font-size:11px;line-height:13px;color:#fff">23:40</div>
<div class="a pre" style="left:1327px;top:882px;font-size:11px;line-height:13px;color:#fff">30.04.2024</div>
<svg class="a" style="left:1398px;top:871px" width="26" height="25" viewBox="0 0 26 25"><path d="M1 1H20V14H9L5 18V14H1z" fill="#fff"/><g stroke="#1e2a3e" stroke-width="1"><path d="M4 4.5H17M4 7.5H17M4 10.5H13"/></g><circle cx="17" cy="16" r="7.5" fill="#2a2f36" stroke="#7a8088" stroke-width="1"/><path d="M16 12.8L17.6 11.8V20" fill="none" stroke="#fff" stroke-width="1.4"/></svg>
<div class="a" style="left:1435px;top:860px;width:1px;height:40px;background:#5a6270"></div>

<!-- ANNOTATIONS -->
<svg class="a" style="left:0;top:0" width="1440" height="900">
<g fill="none" stroke="#e81c24" stroke-width="4.8" stroke-linejoin="round">
 <path d="M254.5 71C254.5 64 256 62.5 262 62.3L292 60.5L840 60.3L866 61.5C873 62 874.3 63.5 874.3 68L874.3 80C874.3 85 872.5 85.5 866 86L842 88.3L292 88.2L262 86.5C256 86 254.5 84 254.5 79Z"/>
 <path d="M257.4 186C257.4 180 259 179 265 178.6L292 176.6L840 176.3L870 178C876 178.5 877.4 180 877.4 185L877.4 195C877.4 200 875.5 200.8 869 201.2L845 204L295 203.8L265 201.6C259 201 257.4 199.5 257.4 194Z"/>
 <path d="M909.5 32.5L1211.5 32.5Q1224.5 32.5 1224.5 45.5L1224.5 123.3Q1224.5 136.3 1211.5 136.3L909.5 136.3Q896.5 136.3 896.5 123.3L896.5 45.5Q896.5 32.5 909.5 32.5Z"/>
 <path d="M405.8 355.6L465.8 355.6Q475.8 355.6 475.8 365.6L475.8 377Q475.8 387 465.8 387L405.8 387Q395.8 387 395.8 377L395.8 365.6Q395.8 355.6 405.8 355.6Z"/>
 <path d="M895.9 487C895.9 481 898 480.2 905 479.8L935 476.5L1270 476.3C1279 476.5 1281.5 478 1281.5 484L1281.5 499C1281.5 504 1279 505 1272 505.3L1240 508.8L935 509.2L905 506.5C898 506 895.9 504.5 895.9 499Z"/>
</g>
</svg>

</body></html>
